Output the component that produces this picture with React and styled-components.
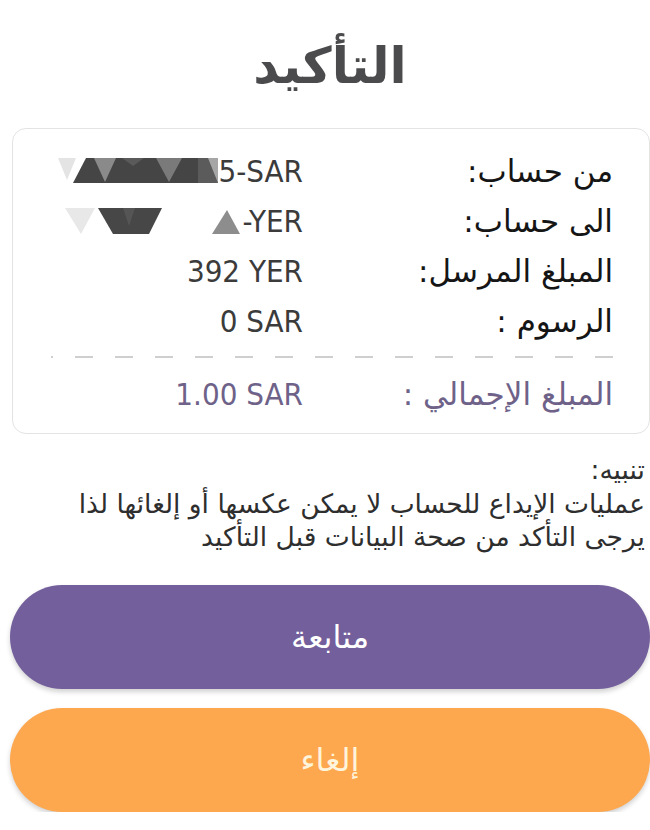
import React from 'react';
import styled, { createGlobalStyle } from 'styled-components';

const GlobalStyle = createGlobalStyle`
  html, body {
    margin: 0;
    padding: 0;
    background: #ffffff;
  }
  body {
    font-family: "DejaVu Sans", "Noto Sans", sans-serif;
  }
`;

const rows = [
  { label: 'من حساب:', masked: 'from', value: '5-SAR' },
  { label: 'الى حساب:', masked: 'to', value: '-YER' },
  { label: 'المبلغ المرسل:', value: '392 YER' },
  { label: 'الرسوم :', value: '0 SAR' },
];

const Mask = ({ kind }) => {
  if (kind === 'from') {
    return (
      <svg width="160" height="26" viewBox="0 0 160 26">
        <polygon points="0,0 18,0 9,22" fill="#e4e4e4" />
        <polygon points="15,25 28,0 150,0 160,25" fill="#454545" />
        <polygon points="36,0 58,0 47,24" fill="#8a8a8a" />
        <polygon points="64,0 86,0 75,8" fill="#5a5a5a" />
        <polygon points="98,0 124,0 111,24" fill="#7a7a7a" />
        <rect x="140" y="0" width="20" height="25" fill="#6a6a6a" opacity="0.6" />
      </svg>
    );
  }
  return (
    <svg width="178" height="30" viewBox="0 0 178 30">
      <polygon points="0,2 30,2 16,28" fill="#e8e8e8" />
      <polygon points="33,2 97,2 84,28 48,28" fill="#474747" />
      <polygon points="58,2 70,2 64,20" fill="#555555" />
      <polygon points="147,28 162,4 175,28" fill="#8d8d8d" />
    </svg>
  );
};

const App = () => {
  return (
    <Page dir="rtl">
      <GlobalStyle />
      <Title>التأكيد</Title>
      <Card>
        {rows.map((row, idx) => (
          <Row key={idx}>
            <Label>{row.label}</Label>
            <Value>
              {row.masked && <Mask kind={row.masked} />}
              <span>{row.value}</span>
            </Value>
          </Row>
        ))}
        <Divider />
        <Row>
          <Label $total>المبلغ الإجمالي :</Label>
          <Value $total>1.00 SAR</Value>
        </Row>
      </Card>
      <Notice>
        <div>تنبيه:</div>
        <div>عمليات الإيداع للحساب لا يمكن عكسها أو إلغائها لذا</div>
        <div>يرجى التأكد من صحة البيانات قبل التأكيد</div>
      </Notice>
      <Actions>
        <Button $bg="#735f9b" $color="#ffffff">متابعة</Button>
        <Button $bg="#fda74f" $color="#fff4dc">إلغاء</Button>
      </Actions>
    </Page>
  );
};

export default App;

const Page = styled.div`
  width: 650px;
  padding: 0 0 0 10px;
  box-sizing: border-box;
  display: flex;
  flex-direction: column;
`;

const Title = styled.h1`
  margin: 0;
  height: 128px;
  display: flex;
  align-items: center;
  justify-content: center;
  padding-top: 4px;
  box-sizing: border-box;
  font-size: 50px;
  font-weight: bold;
  color: #4b4b4d;
`;

const Card = styled.div`
  margin-left: 2px;
  border: 1.5px solid #e3e3e3;
  border-radius: 14px;
  padding: 17px 36px 14px 38px;
  display: flex;
  flex-direction: column;
`;

const Row = styled.div`
  height: 50px;
  display: flex;
  align-items: center;
`;

const Label = styled.div`
  width: 310px;
  font-size: 31px;
  color: ${p => (p.$total ? '#6e6289' : '#151515')};
  white-space: nowrap;
`;

const Value = styled.div`
  direction: ltr;
  flex: 1;
  display: flex;
  align-items: center;
  justify-content: flex-end;
  font-family: "DejaVu Sans Condensed", "DejaVu Sans", sans-serif;
  font-size: 31px;
  color: ${p => (p.$total ? '#6e6289' : '#3b3b3b')};
  white-space: nowrap;
`;

const Divider = styled.div`
  height: 2px;
  margin: 10px 0 11px;
  background-image: linear-gradient(to left, #cfcfcf 18px, transparent 18px);
  background-size: 40px 2px;
  background-position: right top;
`;

const Notice = styled.div`
  margin-top: 19px;
  padding-right: 5px;
  font-size: 26.5px;
  line-height: 33.5px;
  color: #2e2e2e;
`;

const Actions = styled.div`
  margin-top: 31px;
  display: flex;
  flex-direction: column;
  gap: 19px;
`;

const Button = styled.button`
  height: 104px;
  border: none;
  border-radius: 52px;
  background: ${p => p.$bg};
  color: ${p => p.$color};
  font-family: "DejaVu Sans", sans-serif;
  font-size: 32px;
  box-shadow: 0 3px 5px rgba(0, 0, 0, 0.18);
  cursor: pointer;
`;
